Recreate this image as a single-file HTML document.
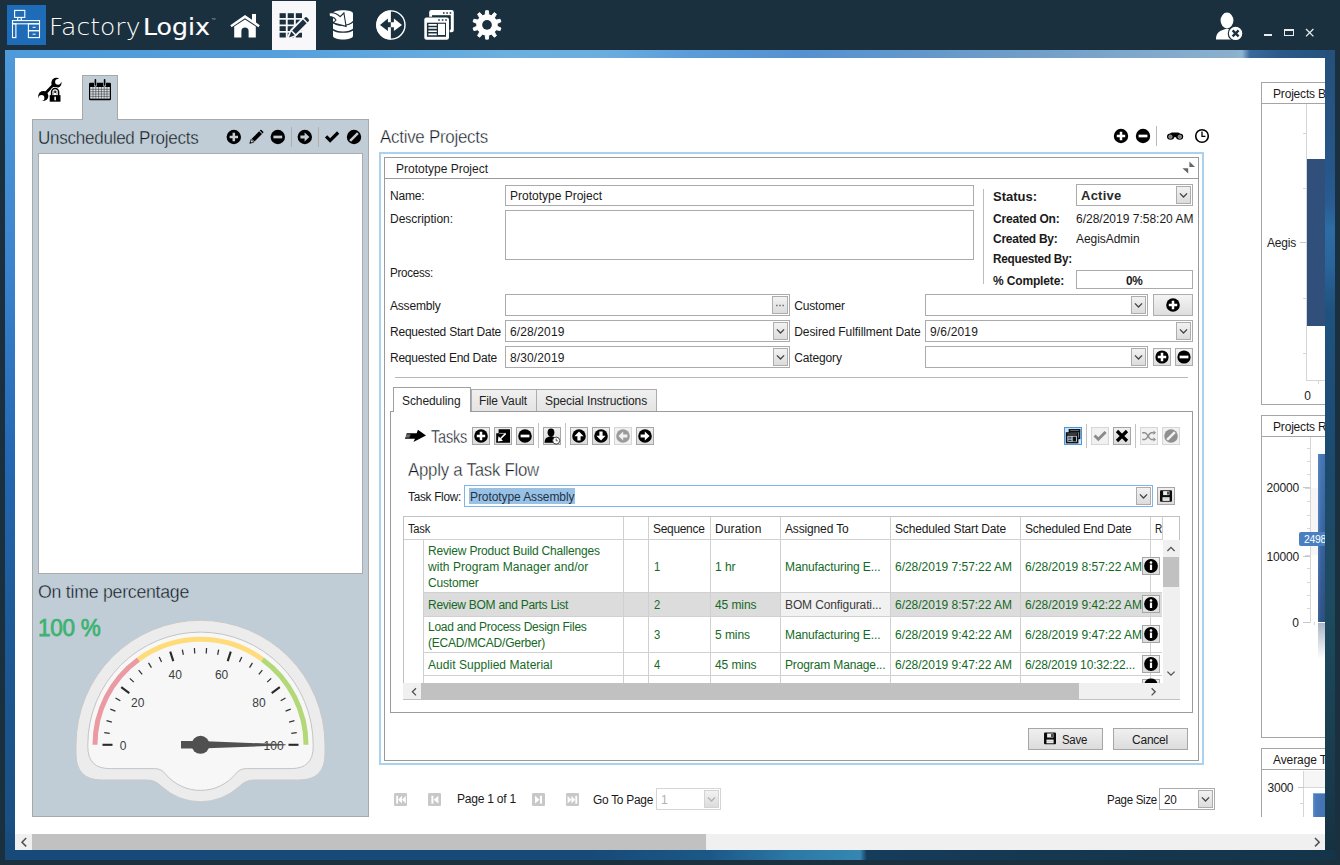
<!DOCTYPE html>
<html lang="en"><head><meta charset="utf-8"><title>FactoryLogix - Project Scheduling</title>
<style>
html,body{margin:0;padding:0}
body{width:1340px;height:865px;overflow:hidden;background:#1a303e;position:relative;
 font-family:"Liberation Sans",sans-serif;font-size:12px;color:#1e1e1e}
.a{position:absolute;box-sizing:border-box}
.t{position:absolute;white-space:nowrap;letter-spacing:-0.15px}
svg{position:absolute;overflow:visible}
.cb{position:absolute;box-sizing:border-box;background:#fff;border:1px solid #acacac}
.dd{position:absolute;box-sizing:border-box;border:1px solid #acacac;background:linear-gradient(#f2f2f2,#dcdcdc)}
.btn{position:absolute;box-sizing:border-box;border:1px solid #acacac;background:linear-gradient(#f3f3f3,#dddddd)}

</style></head><body>
<div class="a" style="left:5px;top:50px;width:1330px;height:8px;background:linear-gradient(90deg,#4f9adb 0%,#559fdc 20%,#6cb0df 38%,#6aaee0 45%,#5a9bd8 52%,#5591d0 60%,#6d9cc8 75%,#8bb0cd 92.5%,#8fb4d0 93%,#3a6a9c 93.6%,#2a5a8a 96%,#25507a 100%)"></div>
<div class="a" style="left:5px;top:50px;width:10px;height:810px;background:linear-gradient(180deg,#4f9adb 0%,#3d86cf 25%,#2468b4 50%,#1d5a98 70%,#1a5083 95%,#174878 100%)"></div>
<div class="a" style="left:1325px;top:50px;width:10px;height:810px;background:linear-gradient(180deg,#25507a 0%,#27568a 15%,#295c92 19%,#2d6ca5 22%,#2a669d 26%,#1f527f 32%,#1d4d76 45%,#1c4a6c 52%,#1e4b60 68%,#1b4254 80%,#17384a 92%,#15303f 100%)"></div>
<div class="a" style="left:5px;top:850px;width:1330px;height:10px;background:linear-gradient(90deg,#17497a 0%,#174a78 44%,#1b5888 53%,#2c78a6 59%,#3587b2 64.3%,#163c5c 64.8%,#15374f 80%,#14344a 100%)"></div>
<div class="a" style="left:15px;top:58px;width:1310px;height:792px;background:#fff"></div>
<div class="a" style="left:7px;top:5px;width:39px;height:40px;background:#1e6bb8"></div>
<svg style="left:7px;top:5px" width="39" height="40" viewBox="7 5 39 40" fill="none" stroke="#fff" stroke-width="1.1">
<rect x="14.6" y="10.4" width="10.2" height="7"/>
<path d="M18 17.6 L17.4 20.2 H21.6 L21 17.6"/>
<rect x="12.5" y="20.6" width="27" height="3.2"/>
<rect x="12.5" y="23.8" width="3.4" height="13.8"/>
<rect x="28.4" y="23.8" width="11.1" height="6.9"/>
<rect x="28.4" y="30.7" width="11.1" height="6.9"/>
<path d="M32.6 27.3 H35.6 M32.6 34.2 H35.6" stroke-width="1"/>
</svg>
<span class="t" style="left:48.6px;top:11.9px;font-size:23px;line-height:30px;color:#fff;font-weight:200;font-family:'DejaVu Sans',sans-serif;letter-spacing:0;transform-origin:0 50%;transform:scaleX(1.089);">Factory</span><span class="t" style="left:142.8px;top:11.9px;font-size:23px;line-height:30px;color:#fff;font-family:'DejaVu Sans',sans-serif;-webkit-text-stroke:0.15px #fff;letter-spacing:0;transform-origin:0 50%;transform:scaleX(1.097);">Logix</span>
<span class="t" style="left:211.2px;top:17.0px;font-size:4.6px;line-height:6px;color:#9fb0bd;letter-spacing:0px;">™</span>
<svg style="left:228px;top:12px" width="34" height="28" viewBox="228 12 34 28">
<path d="M230.3 25.2 L245 15 L252 19.8 V14 H256 V22.6 L259.8 25.2 L258.4 27.2 L245 18.2 L231.6 27.2 Z" fill="#fff"/>
<path d="M234.2 26.6 L245 19.6 L255.8 26.6 V37.6 H248.6 V31 a3.6 3.6 0 0 0 -7.2 0 V37.6 H234.2 Z" fill="#fff"/>
</svg>
<div class="a" style="left:272px;top:1px;width:44px;height:49px;background:#f8f8fb"></div>
<svg style="left:272px;top:1px" width="44" height="49" viewBox="272 1 44 49">
<g fill="#1a303e"><rect x="279.6" y="13.2" width="6.2" height="4.8"/><rect x="287.7" y="13.2" width="6.2" height="4.8"/><rect x="295.8" y="13.2" width="6.2" height="4.8"/><rect x="279.6" y="19.7" width="6.2" height="4.8"/><rect x="287.7" y="19.7" width="6.2" height="4.8"/><rect x="295.8" y="19.7" width="6.2" height="4.8"/><rect x="279.6" y="26.2" width="6.2" height="4.8"/><rect x="287.7" y="26.2" width="6.2" height="4.8"/><rect x="295.8" y="26.2" width="6.2" height="4.8"/><rect x="279.6" y="32.7" width="6.2" height="4.8"/><rect x="287.7" y="32.7" width="6.2" height="4.8"/><rect x="295.8" y="32.7" width="6.2" height="4.8"/></g>
<path d="M288 38.2 L291.4 30.4 L304.4 17.4 L308.8 21.8 L295.8 34.8 Z" fill="#f8f8fb" stroke="#f8f8fb" stroke-width="2.6" stroke-linejoin="round"/>
<path d="M289 37.4 L291.2 31.6 L294.8 35.2 Z M292.2 30.4 L303 19.6 L306.6 23.2 L295.8 34 Z M304 18.6 L305 17.6 a1.4 1.4 0 0 1 2 0 L308.6 19.2 a1.4 1.4 0 0 1 0 2 L307.6 22.2 Z" fill="#1a303e"/>
</svg>
<svg style="left:326px;top:8px" width="32" height="34" viewBox="326 8 32 34">
<path d="M333 13.6 C333 9.2 353 9.2 353 13.6 V36 C353 40.6 333 40.6 333 36 Z" fill="#fff"/>
<path d="M332.6 21.6 C336 26.4 349 26.6 353.4 21.4 M332.6 29.4 C337 33 349 33 353.4 29.4" stroke="#1a303e" stroke-width="1.4" fill="none"/>
<path d="M329 12.9 C333 12.2 337.2 13.6 340.1 16.7 L343.9 13 L346.1 26.4 L333.4 23 L336 20 C334.4 17.8 332 16.7 329.4 16.6 Z" fill="#fff" stroke="#1a303e" stroke-width="1.1" stroke-linejoin="miter"/>
</svg>
<svg style="left:374px;top:9px" width="34" height="34" viewBox="374 9 34 34">
<circle cx="390.9" cy="25" r="14.1" fill="#1a303e" stroke="#fff" stroke-width="1.4"/>
<path d="M390.9 10.4 A14.6 14.6 0 0 0 390.9 39.6 Z" fill="#fff"/>
<path d="M380 25 L387.9 18.5 V22.3 H391 V27.2 H387.9 V31 Z" fill="#1a303e"/>
<path d="M402 25 L393.9 18.5 V22.3 H390.8 V27.2 H393.9 V31 Z" fill="#fff"/>
</svg>
<svg style="left:422px;top:8px" width="34" height="34" viewBox="422 8 34 34">
<rect x="429.2" y="10.1" width="24.6" height="22.1" rx="2.2" fill="#fff"/>
<rect x="432" y="15.2" width="18.8" height="14.5" fill="#1a303e"/>
<path d="M443 13 h1.6 M446.3 13 h1.6 M449.6 13 h1.6" stroke="#1a303e" stroke-width="1.5"/>
<rect x="423.6" y="16.7" width="26.1" height="23.7" rx="2.8" fill="#1a303e"/>
<rect x="424.3" y="17.4" width="24.7" height="22.3" rx="2.2" fill="#fff"/>
<rect x="426.9" y="22.7" width="19.1" height="14.1" fill="#1a303e"/>
<path d="M438.2 20 h1.6 M441.8 20 h1.6 M445.2 20 h1.6" stroke="#1a303e" stroke-width="1.5"/>
<rect x="438" y="23.8" width="7" height="11.2" fill="#fff"/>
<path d="M428.4 24.9 h8.4 M428.4 28 h8.4 M428.4 31.2 h8.4 M428.4 34.4 h8.4" stroke="#fff" stroke-width="1.6"/>
</svg>
<svg style="left:470px;top:8px" width="34" height="34" viewBox="470 8 34 34">
<polygon points="485.15,14.87 485.65,10.66 488.35,10.66 488.85,14.87 491.40,15.70 494.28,12.59 496.46,14.17 494.39,17.87 495.97,20.04 500.12,19.22 500.96,21.78 497.11,23.56 497.11,26.24 500.96,28.02 500.12,30.58 495.97,29.76 494.39,31.93 496.46,35.63 494.28,37.21 491.40,34.10 488.85,34.93 488.35,39.14 485.65,39.14 485.15,34.93 482.60,34.10 479.72,37.21 477.54,35.63 479.61,31.93 478.03,29.76 473.88,30.58 473.04,28.02 476.89,26.24 476.89,23.56 473.04,21.78 473.88,19.22 478.03,20.04 479.61,17.87 477.54,14.17 479.72,12.59 482.60,15.70" fill="#fff" stroke="#fff" stroke-width="0.9" stroke-linejoin="round"/>
<circle cx="487" cy="24.9" r="10.4" fill="#fff"/>
<circle cx="487" cy="24.9" r="4.85" fill="#1a303e"/>
</svg>
<svg style="left:1212px;top:9px" width="36" height="34" viewBox="1212 9 36 34">
<ellipse cx="1227" cy="20.4" rx="6.4" ry="7.8" fill="#fff"/>
<path d="M1216 39.4 C1216 33 1219 31 1224 29.4 L1227 28.4 L1230 29.4 C1235 31 1238 33 1238 39.4 Z" fill="#fff"/>
<circle cx="1235.6" cy="33.4" r="7.3" fill="#fff" stroke="#1a303e" stroke-width="1.2"/>
<path d="M1232.6 30.4 L1238.6 36.4 M1238.6 30.4 L1232.6 36.4" stroke="#1a303e" stroke-width="2.3"/>
</svg>
<div class="a" style="left:1264px;top:33.7px;width:7.6px;height:2.3px;background:#e8ecef"></div>
<div class="a" style="left:1284px;top:29px;width:9.5px;height:7.2px;border:1px solid #e8ecef;border-top-width:2.2px"></div>
<svg style="left:1303px;top:26px" width="14" height="14" viewBox="1303 26 14 14"><path d="M1306 29 L1313.4 36.4 M1313.4 29 L1306 36.4" stroke="#e8ecef" stroke-width="1.3"/></svg>
<div class="a" style="left:32px;top:119px;width:337px;height:698px;background:#c0cdd6;border:1px solid #a8a8a8"></div>
<div class="a" style="left:82px;top:75px;width:36px;height:45px;background:#c0cdd6;border:1px solid #a8a8a8;border-bottom:none"></div>
<svg style="left:34px;top:74px" width="32" height="32" viewBox="34 74 32 32">
<path d="M53.4 85 L45.4 93.2" stroke="#000" stroke-width="2.7"/>
<circle cx="56.4" cy="82.9" r="5.1" fill="#000"/>
<circle cx="58" cy="81.8" r="2.9" fill="#fff"/>
<path d="M58 81.8 L64.4 76.8" stroke="#fff" stroke-width="4.3"/>
<circle cx="43.3" cy="96" r="5.1" fill="#000"/>
<circle cx="41.5" cy="97.9" r="2.9" fill="#fff"/>
<path d="M41.5 97.9 L36 103.8" stroke="#fff" stroke-width="4.1"/>
<path d="M51.6 95.4 V92 a3.5 3.5 0 0 1 7 0 V95.4" fill="#fff" stroke="#fff" stroke-width="3.2"/>
<rect x="48.9" y="94.3" width="12.4" height="8.2" fill="#fff"/>
<path d="M51.6 95.4 V92 a3.5 3.5 0 0 1 7 0 V95.4" fill="none" stroke="#000" stroke-width="1.5"/>
<path d="M53.4 94.6 V92.2 a1.7 1.7 0 0 1 3.4 0 V94.6" fill="none" stroke="#9a9a9a" stroke-width="0.9"/>
<circle cx="55.1" cy="92" r="1" fill="#000"/>
<rect x="49.7" y="95.1" width="10.8" height="6.6" fill="#000"/>
<rect x="54.3" y="96.6" width="1.7" height="3.9" rx="0.8" fill="#e8e8e8"/>
</svg>
<svg style="left:88px;top:78px" width="24" height="24" viewBox="88 78 24 24">
<rect x="89" y="82.8" width="22" height="17.4" rx="1.2" fill="#000"/>
<rect x="90.2" y="87" width="19.6" height="11.6" fill="#d9e1e7"/>
<path d="M93.0 87 V98.6" stroke="#222" stroke-width="0.5"/><path d="M95.8 87 V98.6" stroke="#222" stroke-width="0.5"/><path d="M98.6 87 V98.6" stroke="#222" stroke-width="0.5"/><path d="M101.4 87 V98.6" stroke="#222" stroke-width="0.5"/><path d="M104.2 87 V98.6" stroke="#222" stroke-width="0.5"/><path d="M107.0 87 V98.6" stroke="#222" stroke-width="0.5"/><path d="M90.2 89.35 H109.8" stroke="#222" stroke-width="0.5"/><path d="M90.2 91.70 H109.8" stroke="#222" stroke-width="0.5"/><path d="M90.2 94.05 H109.8" stroke="#222" stroke-width="0.5"/><path d="M90.2 96.40 H109.8" stroke="#222" stroke-width="0.5"/>
<path d="M95.4 79.6 V85.4 M104.6 79.6 V85.4" stroke="#c0cdd6" stroke-width="2.8" stroke-linecap="round"/>
<path d="M95.4 79.8 V85 M104.6 79.8 V85" stroke="#000" stroke-width="1.6" stroke-linecap="round"/>
</svg>
<span class="t" style="left:38px;top:126.1px;font-size:18px;line-height:24px;color:#0d151d;-webkit-text-stroke:0.4px #c0cdd6;letter-spacing:-0.28px;transform-origin:0 50%;transform:scaleX(0.947);">Unscheduled Projects</span>
<div class="a" style="left:38px;top:153px;width:325px;height:421px;background:#fff;border:1px solid #ababab"></div>
<svg style="left:0;top:0" width="1340" height="865" viewBox="0 0 1340 865">
<circle cx="233.8" cy="137" r="7.2" fill="#000"/><path d="M229.60000000000002 137 H238.0 M233.8 132.8 V141.2" stroke="#c0cdd6" stroke-width="2.5"/>
<g transform="translate(256 137.2) scale(0.88)"><path d="M-7 7 L-5.6 2.4 L-2.4 5.6 Z" fill="none" stroke="#000" stroke-width="0.8"/><path d="M-7 7 L-6.3 4.8 L-4.8 6.3 Z" fill="#000"/><path d="M-4.9 1.7 L3.6 -6.8 L6.8 -3.6 L-1.7 4.9 Z" fill="#000"/><path d="M4.3 -7.5 L5 -8.2 a0.9 0.9 0 0 1 1.3 0 L8.2 -6.3 a0.9 0.9 0 0 1 0 1.3 L7.5 -4.3 Z" fill="#000"/></g>
<circle cx="277.8" cy="137" r="7.2" fill="#000"/><path d="M273.40000000000003 137 H282.2" stroke="#c0cdd6" stroke-width="2.7"/>
<path d="M291.5 127 V147 M318.5 127 V147" stroke="#b3aea8" stroke-width="1"/>
<circle cx="304.8" cy="137" r="7.2" fill="#000"/><path transform="rotate(0 304.8 137)" d="M300.40000000000003 135.4 H304.6 V132.4 L309.40000000000003 137 L304.6 141.6 V138.6 H300.40000000000003 Z" fill="#c0cdd6"/>
<path transform="translate(332 137.4) scale(1.04)" d="M-6.8 0.2 L-4.6 -2 L-1.8 0.8 L4.8 -5.8 L7 -3.6 L-1.8 5.2 Z" fill="#000"/>
<circle cx="354" cy="137" r="7.2" fill="#000"/><path d="M350.1 140.9 L357.9 133.1" stroke="#c0cdd6" stroke-width="2.5" stroke-linecap="butt"/>
</svg>
<span class="t" style="left:38px;top:579.7px;font-size:18px;line-height:24px;color:#0d151d;-webkit-text-stroke:0.4px #c0cdd6;letter-spacing:-0.28px;transform-origin:0 50%;transform:scaleX(0.987);">On time percentage</span>
<span class="t" style="left:38px;top:614.4px;font-size:23.5px;line-height:28px;color:#3cb371;-webkit-text-stroke:0.75px #3cb371;letter-spacing:-0.28px;transform-origin:0 50%;transform:scaleX(0.958);">100 %</span>
<svg style="left:0;top:0" width="1340" height="865" viewBox="0 0 1340 865">
<path d="M76.0 744.8 A124.5 124.5 0 0 1 325.0 744.8 V754.0 Q325.0 780.0 299.0 780.0 H254.3 Q245.3 780.0 239.2 786.6 A57 57 0 0 1 161.8 786.6 Q155.7 780.0 146.7 780.0 H102.0 Q76.0 780.0 76.0 754.0 Z" fill="#ececec" stroke="#c9c9c9" stroke-width="1"/>
<path d="M87.8 744.8 A112.7 112.7 0 0 1 313.2 744.8 V746.6 Q313.2 768.6 291.2 768.6 H246.4 Q239.4 768.6 235.3 774.3 A45.6 45.6 0 0 1 165.7 774.3 Q161.6 768.6 154.6 768.6 H109.8 Q87.8 768.6 87.8 746.6 Z" fill="#f7f7f7" stroke="#c4c4c4" stroke-width="1"/>
<path d="M95.00 744.80 A105.5 105.5 0 0 1 138.49 659.45" stroke="#ea9aa2" stroke-width="5" fill="none"/>
<path d="M138.49 659.45 A105.5 105.5 0 0 1 262.51 659.45" stroke="#ffdc7a" stroke-width="5" fill="none"/>
<path d="M262.51 659.45 A105.5 105.5 0 0 1 306.00 744.80" stroke="#b2d878" stroke-width="5" fill="none"/>
<path d="M112.50 744.80 L102.50 744.80" stroke="#2a2a2a" stroke-width="2.1"/><path d="M109.72 733.33 L104.26 732.64" stroke="#333" stroke-width="1.25"/><path d="M111.87 722.04 L106.55 720.68" stroke="#333" stroke-width="1.25"/><path d="M115.43 711.12 L110.31 709.09" stroke="#333" stroke-width="1.25"/><path d="M120.32 700.72 L115.50 698.07" stroke="#333" stroke-width="1.25"/><path d="M129.31 693.07 L121.22 687.20" stroke="#2a2a2a" stroke-width="2.1"/><path d="M133.80 682.16 L129.79 678.40" stroke="#333" stroke-width="1.25"/><path d="M142.18 674.30 L138.67 670.06" stroke="#333" stroke-width="1.25"/><path d="M151.47 667.54 L148.52 662.90" stroke="#333" stroke-width="1.25"/><path d="M161.54 662.01 L159.20 657.03" stroke="#333" stroke-width="1.25"/><path d="M173.31 661.11 L170.22 651.60" stroke="#2a2a2a" stroke-width="2.1"/><path d="M183.35 654.92 L182.32 649.52" stroke="#333" stroke-width="1.25"/><path d="M194.75 653.48 L194.41 647.99" stroke="#333" stroke-width="1.25"/><path d="M206.25 653.48 L206.59 647.99" stroke="#333" stroke-width="1.25"/><path d="M217.65 654.92 L218.68 649.52" stroke="#333" stroke-width="1.25"/><path d="M227.69 661.11 L230.78 651.60" stroke="#2a2a2a" stroke-width="2.1"/><path d="M239.46 662.01 L241.80 657.03" stroke="#333" stroke-width="1.25"/><path d="M249.53 667.54 L252.48 662.90" stroke="#333" stroke-width="1.25"/><path d="M258.82 674.30 L262.33 670.06" stroke="#333" stroke-width="1.25"/><path d="M267.20 682.16 L271.21 678.40" stroke="#333" stroke-width="1.25"/><path d="M271.69 693.07 L279.78 687.20" stroke="#2a2a2a" stroke-width="2.1"/><path d="M280.68 700.72 L285.50 698.07" stroke="#333" stroke-width="1.25"/><path d="M285.57 711.12 L290.69 709.09" stroke="#333" stroke-width="1.25"/><path d="M289.13 722.04 L294.45 720.68" stroke="#333" stroke-width="1.25"/><path d="M291.28 733.33 L296.74 732.64" stroke="#333" stroke-width="1.25"/><path d="M288.50 744.80 L298.50 744.80" stroke="#2a2a2a" stroke-width="2.1"/>
<text x="123.0" y="749.8" text-anchor="middle" font-size="12" fill="#3c3c3c" font-family="Liberation Sans, sans-serif">0</text><text x="137.8" y="706.6" text-anchor="middle" font-size="12" fill="#3c3c3c" font-family="Liberation Sans, sans-serif">20</text><text x="175.3" y="679.4" text-anchor="middle" font-size="12" fill="#3c3c3c" font-family="Liberation Sans, sans-serif">40</text><text x="221.6" y="679.4" text-anchor="middle" font-size="12" fill="#3c3c3c" font-family="Liberation Sans, sans-serif">60</text><text x="259.0" y="706.6" text-anchor="middle" font-size="12" fill="#3c3c3c" font-family="Liberation Sans, sans-serif">80</text><text x="273.6" y="749.8" text-anchor="middle" font-size="12" fill="#3c3c3c" font-family="Liberation Sans, sans-serif">100</text>
<path d="M181 741 H200 L285.6 744.3 V745.3 L200 748.6 H181 Z" fill="#505050"/>
<circle cx="200.5" cy="744.8" r="9" fill="#505050"/>
</svg>
<span class="t" style="left:380px;top:124.8px;font-size:18px;line-height:24px;color:#0d151d;-webkit-text-stroke:0.4px #fff;letter-spacing:-0.28px;transform-origin:0 50%;transform:scaleX(0.940);">Active Projects</span>
<svg style="left:0;top:0" width="1340" height="865" viewBox="0 0 1340 865">
<circle cx="1121" cy="136" r="7.2" fill="#000"/><path d="M1116.8 136 H1125.2 M1121 131.8 V140.2" stroke="#fff" stroke-width="2.5"/>
<circle cx="1143" cy="136" r="7.2" fill="#000"/><path d="M1138.6 136 H1147.4" stroke="#fff" stroke-width="2.7"/>
<path d="M1156.5 126 V146" stroke="#b9b9b9" stroke-width="1"/>
<g fill="#000"><ellipse cx="1170.6" cy="136.6" rx="3.6" ry="3.2"/><ellipse cx="1179.6" cy="136.6" rx="3.6" ry="3.2"/><rect x="1170" y="132.6" width="10" height="4.6" rx="2"/></g>
<circle cx="1170.4" cy="136.8" r="1.8" fill="#777" stroke="#ddd" stroke-width="0.5"/><circle cx="1179.8" cy="136.8" r="1.8" fill="#777" stroke="#ddd" stroke-width="0.5"/>
<circle cx="1202" cy="136" r="6.3" fill="#fff" stroke="#000" stroke-width="1.6"/>
<path d="M1202 131.6 V136.4 H1205.4" stroke="#000" stroke-width="1.3" fill="none"/>
</svg>
<div class="a" style="left:379px;top:152px;width:825px;height:613px;border:2px solid #a9d1f0;background:#fff"></div>
<div class="a" style="left:384px;top:157px;width:815px;height:604px;border:1px solid #9b9b9b"></div>
<div class="a" style="left:384px;top:178px;width:815px;height:1px;background:#9b9b9b"></div>
<span class="t" style="left:396px;top:161.0px;font-size:12px;line-height:17px;color:#1e1e1e;letter-spacing:-0.00px;">Prototype Project</span>
<svg style="left:1180px;top:160px" width="18" height="16" viewBox="1180 160 18 16"><path d="M1189.4 161.6 L1195 167 H1189.4 Z M1188.2 173.6 L1182.4 168.2 H1188.2 Z" fill="#666"/></svg>
<span class="t" style="left:390px;top:188.0px;font-size:12px;line-height:17px;color:#1a1a1a;letter-spacing:-0.17px;">Name:</span>
<div class="a" style="left:505px;top:185px;width:469px;height:21px;border:1px solid #ababab;background:#fff"></div>
<span class="t" style="left:510px;top:188.0px;font-size:12px;line-height:17px;color:#1a1a1a;letter-spacing:-0.00px;">Prototype Project</span>
<span class="t" style="left:390px;top:210.7px;font-size:12px;line-height:17px;color:#1a1a1a;letter-spacing:-0.03px;">Description:</span>
<div class="a" style="left:505px;top:210px;width:469px;height:50px;border:1px solid #ababab;background:#fff"></div>
<span class="t" style="left:390px;top:265.0px;font-size:12px;line-height:17px;color:#1a1a1a;letter-spacing:-0.28px;transform-origin:0 50%;transform:scaleX(0.967);">Process:</span>
<div class="a" style="left:983px;top:189px;width:1px;height:95px;background:#bdbdbd"></div>
<span class="t" style="left:993px;top:188.1px;font-size:13px;line-height:18px;color:#1a1a1a;font-weight:700;letter-spacing:-0.01px;">Status:</span>
<div class="a" style="left:1076px;top:184px;width:117px;height:22px;border:1px solid #ababab;background:#fff"></div>
<div class="dd" style="left:1176px;top:186px;width:15px;height:18px;border-color:#adadad"></div><svg style="left:1176px;top:186px" width="15" height="18" viewBox="0 0 15 18"><path d="M3.9 7.4 L7.5 11.0 L11.1 7.4" fill="none" stroke="#444" stroke-width="1.3"/></svg>
<span class="t" style="left:1081px;top:186.6px;font-size:13px;line-height:18px;color:#2a2a2a;font-weight:700;letter-spacing:0.24px;">Active</span>
<span class="t" style="left:993px;top:211.0px;font-size:12px;line-height:17px;color:#1a1a1a;font-weight:700;letter-spacing:-0.20px;">Created On:</span>
<span class="t" style="left:1076px;top:211.0px;font-size:12px;line-height:17px;color:#1a1a1a;letter-spacing:0.00px;">6/28/2019 7:58:20 AM</span>
<span class="t" style="left:993px;top:231.3px;font-size:12px;line-height:17px;color:#1a1a1a;font-weight:700;letter-spacing:-0.26px;">Created By:</span>
<span class="t" style="left:1076px;top:231.3px;font-size:12px;line-height:17px;color:#1a1a1a;letter-spacing:-0.05px;">AegisAdmin</span>
<span class="t" style="left:993px;top:250.8px;font-size:12px;line-height:17px;color:#1a1a1a;font-weight:700;letter-spacing:-0.28px;transform-origin:0 50%;transform:scaleX(0.983);">Requested By:</span>
<span class="t" style="left:993px;top:273.0px;font-size:12px;line-height:17px;color:#1a1a1a;font-weight:700;letter-spacing:-0.15px;">% Complete:</span>
<div class="a" style="left:1076px;top:270px;width:117px;height:19px;border:1px solid #ababab;background:#fff"></div>
<span class="t" style="left:1126px;top:272.8px;font-size:12px;line-height:17px;color:#1a1a1a;font-weight:700;letter-spacing:-0.28px;transform-origin:0 50%;transform:scaleX(0.983);">0%</span>
<span class="t" style="left:390px;top:298.3px;font-size:12px;line-height:17px;color:#1a1a1a;letter-spacing:-0.19px;">Assembly</span>
<div class="a" style="left:505px;top:294px;width:285px;height:22px;border:1px solid #ababab;background:#fff"></div>
<div class="dd" style="left:772px;top:296px;width:16px;height:18px;border-color:#adadad"></div><svg style="left:772px;top:296px" width="16" height="18" viewBox="0 0 16 18"><path d="M4.0 9.5 h1.6 m1.6 0 h1.6 m1.6 0 h1.6" stroke="#777" stroke-width="1.4"/></svg>
<span class="t" style="left:794.2px;top:298.3px;font-size:12px;line-height:17px;color:#1a1a1a;letter-spacing:-0.18px;">Customer</span>
<div class="a" style="left:925px;top:294px;width:223px;height:22px;border:1px solid #ababab;background:#fff"></div>
<div class="dd" style="left:1131px;top:296px;width:15px;height:18px;border-color:#adadad"></div><svg style="left:1131px;top:296px" width="15" height="18" viewBox="0 0 15 18"><path d="M3.9 7.4 L7.5 11.0 L11.1 7.4" fill="none" stroke="#444" stroke-width="1.3"/></svg>
<div class="a" style="left:1153px;top:294px;width:40px;height:22px;border:1px solid #adadad;background:linear-gradient(#f4f4f4,#dedede)"></div>
<svg style="left:0;top:0" width="1340" height="865" viewBox="0 0 1340 865"><circle cx="1173" cy="305" r="6.8" fill="#000"/><path d="M1168.8 305 H1177.2 M1173 300.8 V309.2" stroke="#fff" stroke-width="2.5"/></svg>
<span class="t" style="left:390px;top:324.1px;font-size:12px;line-height:17px;color:#1a1a1a;letter-spacing:-0.22px;">Requested Start Date</span>
<div class="a" style="left:505px;top:320px;width:285px;height:22px;border:1px solid #ababab;background:#fff"></div>
<div class="dd" style="left:773px;top:322px;width:15px;height:18px;border-color:#adadad"></div><svg style="left:773px;top:322px" width="15" height="18" viewBox="0 0 15 18"><path d="M3.9 7.4 L7.5 11.0 L11.1 7.4" fill="none" stroke="#444" stroke-width="1.3"/></svg>
<span class="t" style="left:510px;top:324.1px;font-size:12px;line-height:17px;color:#1a1a1a;letter-spacing:0.12px;">6/28/2019</span>
<span class="t" style="left:794.2px;top:324.1px;font-size:12px;line-height:17px;color:#1a1a1a;letter-spacing:-0.07px;">Desired Fulfillment Date</span>
<div class="a" style="left:925px;top:320px;width:268px;height:22px;border:1px solid #ababab;background:#fff"></div>
<div class="dd" style="left:1176px;top:322px;width:15px;height:18px;border-color:#adadad"></div><svg style="left:1176px;top:322px" width="15" height="18" viewBox="0 0 15 18"><path d="M3.9 7.4 L7.5 11.0 L11.1 7.4" fill="none" stroke="#444" stroke-width="1.3"/></svg>
<span class="t" style="left:930px;top:324.1px;font-size:12px;line-height:17px;color:#1a1a1a;letter-spacing:0.16px;">9/6/2019</span>
<span class="t" style="left:390px;top:350.1px;font-size:12px;line-height:17px;color:#1a1a1a;letter-spacing:-0.25px;">Requested End Date</span>
<div class="a" style="left:505px;top:346px;width:285px;height:22px;border:1px solid #ababab;background:#fff"></div>
<div class="dd" style="left:773px;top:348px;width:15px;height:18px;border-color:#adadad"></div><svg style="left:773px;top:348px" width="15" height="18" viewBox="0 0 15 18"><path d="M3.9 7.4 L7.5 11.0 L11.1 7.4" fill="none" stroke="#444" stroke-width="1.3"/></svg>
<span class="t" style="left:510px;top:350.1px;font-size:12px;line-height:17px;color:#1a1a1a;letter-spacing:0.12px;">8/30/2019</span>
<span class="t" style="left:794.2px;top:350.1px;font-size:12px;line-height:17px;color:#1a1a1a;letter-spacing:-0.14px;">Category</span>
<div class="a" style="left:925px;top:346px;width:223px;height:22px;border:1px solid #ababab;background:#fff"></div>
<div class="dd" style="left:1131px;top:348px;width:15px;height:18px;border-color:#adadad"></div><svg style="left:1131px;top:348px" width="15" height="18" viewBox="0 0 15 18"><path d="M3.9 7.4 L7.5 11.0 L11.1 7.4" fill="none" stroke="#444" stroke-width="1.3"/></svg>
<div class="a" style="left:1153px;top:348px;width:18px;height:18px;border:1px solid #adadad;background:linear-gradient(#f4f4f4,#dedede)"></div>
<svg style="left:0;top:0" width="1340" height="865" viewBox="0 0 1340 865"><circle cx="1162" cy="357" r="6.6" fill="#000"/><path d="M1157.8 357 H1166.2 M1162 352.8 V361.2" stroke="#fff" stroke-width="2.5"/></svg>
<div class="a" style="left:1175px;top:348px;width:18px;height:18px;border:1px solid #adadad;background:linear-gradient(#f4f4f4,#dedede)"></div>
<svg style="left:0;top:0" width="1340" height="865" viewBox="0 0 1340 865"><circle cx="1184" cy="357" r="6.6" fill="#000"/><path d="M1179.6 357 H1188.4" stroke="#fff" stroke-width="2.7"/></svg>
<div class="a" style="left:395px;top:377px;width:793px;height:1px;background:#b8b8b8"></div>
<div class="a" style="left:471px;top:389px;width:66px;height:23px;border:1px solid #acacac;background:linear-gradient(#f0f0f0,#e4e4e4)"></div>
<div class="a" style="left:536px;top:389px;width:121px;height:23px;border:1px solid #acacac;background:linear-gradient(#f0f0f0,#e4e4e4)"></div>
<div class="a" style="left:390px;top:411px;width:803px;height:302px;border:1px solid #9b9b9b;background:#fff"></div>
<div class="a" style="left:393px;top:387px;width:78px;height:25px;border:1px solid #a0a0a0;border-bottom:none;background:#fff"></div>
<span class="t" style="left:402px;top:393.0px;font-size:12px;line-height:17px;color:#222;letter-spacing:-0.09px;">Scheduling</span>
<span class="t" style="left:479px;top:393.0px;font-size:12px;line-height:17px;color:#222;letter-spacing:-0.11px;">File Vault</span>
<span class="t" style="left:545px;top:393.0px;font-size:12px;line-height:17px;color:#222;letter-spacing:-0.10px;">Special Instructions</span>
<svg style="left:0;top:0" width="1340" height="865" viewBox="0 0 1340 865"><path d="M417.9 429.8 L426 435.5 L413.4 442 L415 438.7 H404.9 L406.7 433.2 H416.7 Z" fill="#000"/>
<path d="M405.6 435.1 H410.4 M405 436.9 H409.6" stroke="#fff" stroke-width="0.7"/></svg>
<span class="t" style="left:431.4px;top:424.7px;font-size:18px;line-height:24px;color:#0d151d;-webkit-text-stroke:0.4px #fff;letter-spacing:-0.28px;transform-origin:0 50%;transform:scaleX(0.807);">Tasks</span>
<div class="a" style="left:472px;top:427px;width:18px;height:18px;border:1px solid #a6a6a6;background:linear-gradient(#f0f0f0,#dcdcdc)"></div>
<svg style="left:0;top:0" width="1340" height="865" viewBox="0 0 1340 865"><circle cx="481" cy="436" r="6.8" fill="#000"/><path d="M476.8 436 H485.2 M481 431.8 V440.2" stroke="#fff" stroke-width="2.5"/></svg>
<div class="a" style="left:494px;top:427px;width:18px;height:18px;border:1px solid #a6a6a6;background:linear-gradient(#f0f0f0,#dcdcdc)"></div>
<svg style="left:0;top:0" width="1340" height="865" viewBox="0 0 1340 865"><path d="M498.6 429.2 H510 V442.8 H496.2 V433.2 H498.6 Z" fill="#000"/>
<path d="M499.2 433.4 H506" stroke="#ddd" stroke-width="0.7"/>
<path d="M505.6 433.6 L500.4 438.8" stroke="#fff" stroke-width="1.5"/><path d="M497.8 441.4 L498.5 436.2 L503 440.7 Z" fill="#fff"/></svg>
<div class="a" style="left:516px;top:427px;width:18px;height:18px;border:1px solid #a6a6a6;background:linear-gradient(#f0f0f0,#dcdcdc)"></div>
<svg style="left:0;top:0" width="1340" height="865" viewBox="0 0 1340 865"><circle cx="525" cy="436" r="6.8" fill="#000"/><path d="M520.6 436 H529.4" stroke="#fff" stroke-width="2.7"/></svg>
<div class="a" style="left:538px;top:423px;width:1px;height:25px;background:#c4c4c4"></div>
<div class="a" style="left:543px;top:427px;width:18px;height:18px;border:1px solid #a6a6a6;background:linear-gradient(#f0f0f0,#dcdcdc)"></div>
<svg style="left:0;top:0" width="1340" height="865" viewBox="0 0 1340 865"><ellipse cx="551" cy="432.5" rx="3.4" ry="3.9" fill="#000"/><path d="M544.6 442.8 C544.6 438.2 546.6 437.2 551 436 C555.4 437.2 557.4 438.2 557.4 442.8 Z" fill="#000"/>
<circle cx="556.2" cy="440.6" r="3.5" fill="#fff" stroke="#333" stroke-width="0.9"/><path d="M556.2 438.6 V440.8 H557.8" stroke="#333" stroke-width="0.8" fill="none"/></svg>
<div class="a" style="left:565px;top:423px;width:1px;height:25px;background:#c4c4c4"></div>
<div class="a" style="left:570px;top:427px;width:18px;height:18px;border:1px solid #a6a6a6;background:linear-gradient(#f0f0f0,#dcdcdc)"></div>
<svg style="left:0;top:0" width="1340" height="865" viewBox="0 0 1340 865"><circle cx="579" cy="436" r="6.8" fill="#000"/><path transform="rotate(270 579 436)" d="M574.6 434.4 H578.8 V431.4 L583.6 436 L578.8 440.6 V437.6 H574.6 Z" fill="#fff"/></svg>
<div class="a" style="left:592px;top:427px;width:18px;height:18px;border:1px solid #a6a6a6;background:linear-gradient(#f0f0f0,#dcdcdc)"></div>
<svg style="left:0;top:0" width="1340" height="865" viewBox="0 0 1340 865"><circle cx="601" cy="436" r="6.8" fill="#000"/><path transform="rotate(90 601 436)" d="M596.6 434.4 H600.8 V431.4 L605.6 436 L600.8 440.6 V437.6 H596.6 Z" fill="#fff"/></svg>
<div class="a" style="left:614px;top:427px;width:18px;height:18px;border:1px solid #d6d6d6;background:#f1f1f1"></div>
<svg style="left:0;top:0" width="1340" height="865" viewBox="0 0 1340 865"><circle cx="623" cy="436" r="6.8" fill="#9a9a9a"/><path transform="rotate(180 623 436)" d="M618.6 434.4 H622.8 V431.4 L627.6 436 L622.8 440.6 V437.6 H618.6 Z" fill="#f1f1f1"/></svg>
<div class="a" style="left:636px;top:427px;width:18px;height:18px;border:1px solid #a6a6a6;background:linear-gradient(#f0f0f0,#dcdcdc)"></div>
<svg style="left:0;top:0" width="1340" height="865" viewBox="0 0 1340 865"><circle cx="645" cy="436" r="6.8" fill="#000"/><path transform="rotate(0 645 436)" d="M640.6 434.4 H644.8 V431.4 L649.6 436 L644.8 440.6 V437.6 H640.6 Z" fill="#fff"/></svg>
<div class="a" style="left:1064px;top:427px;width:18px;height:18px;border:1px solid #4a97e0;background:#cfe3f8"></div>
<svg style="left:0;top:0" width="1340" height="865" viewBox="0 0 1340 865"><rect x="1069.4" y="429.8" width="10.2" height="8.6" fill="#cfe3f8" stroke="#111" stroke-width="1.5"/>
<path d="M1069.4 431.6 H1079.6" stroke="#111" stroke-width="1.4"/>
<rect x="1066.6" y="433" width="11" height="9.6" fill="#cfe3f8" stroke="#111" stroke-width="1.6"/>
<path d="M1066.6 435 H1077.6" stroke="#111" stroke-width="1.6"/>
<rect x="1072.6" y="436.6" width="3.4" height="4.8" fill="#111"/>
<path d="M1068.2 437.2 h3.4 M1068.2 438.9 h3.4 M1068.2 440.6 h3.4" stroke="#111" stroke-width="0.9"/></svg>
<div class="a" style="left:1086px;top:424px;width:1px;height:24px;background:#c4c4c4"></div>
<div class="a" style="left:1091px;top:427px;width:18px;height:18px;border:1px solid #d6d6d6;background:#f1f1f1"></div>
<svg style="left:0;top:0" width="1340" height="865" viewBox="0 0 1340 865"><path transform="translate(1100 436.4) scale(0.95)" d="M-6.8 0.2 L-4.6 -2 L-1.8 0.8 L4.8 -5.8 L7 -3.6 L-1.8 5.2 Z" fill="#8a8a8a"/></svg>
<div class="a" style="left:1113px;top:427px;width:18px;height:18px;border:1px solid #a6a6a6;background:linear-gradient(#f0f0f0,#dcdcdc)"></div>
<svg style="left:0;top:0" width="1340" height="865" viewBox="0 0 1340 865"><path d="M1117 431 L1127 441 M1127 431 L1117 441" stroke="#000" stroke-width="3.2"/></svg>
<div class="a" style="left:1135px;top:424px;width:1px;height:24px;background:#c4c4c4"></div>
<div class="a" style="left:1140px;top:427px;width:18px;height:18px;border:1px solid #d6d6d6;background:#f1f1f1"></div>
<svg style="left:0;top:0" width="1340" height="865" viewBox="0 0 1340 865"><g fill="none" stroke="#8f8f8f" stroke-width="1.5"><path d="M1142.2 432.8 H1145 C1147.6 432.8 1148.6 439.4 1151.4 439.4 H1153.6"/><path d="M1142.2 439.4 H1145 C1147.6 439.4 1148.6 432.8 1151.4 432.8 H1153.6"/></g>
<path d="M1153.4 430.6 L1156 432.8 L1153.4 435 Z M1153.4 437.2 L1156 439.4 L1153.4 441.6 Z" fill="#8f8f8f"/></svg>
<div class="a" style="left:1162px;top:427px;width:18px;height:18px;border:1px solid #d6d6d6;background:#f1f1f1"></div>
<svg style="left:0;top:0" width="1340" height="865" viewBox="0 0 1340 865"><circle cx="1171" cy="436" r="6.8" fill="#8f8f8f"/><path d="M1167.1 439.9 L1174.9 432.1" stroke="#f1f1f1" stroke-width="2.5" stroke-linecap="butt"/></svg>
<span class="t" style="left:408px;top:458.1px;font-size:18px;line-height:24px;color:#0d151d;-webkit-text-stroke:0.4px #fff;letter-spacing:-0.28px;transform-origin:0 50%;transform:scaleX(0.936);">Apply a Task Flow</span>
<span class="t" style="left:408px;top:488.7px;font-size:12px;line-height:17px;color:#1a1a1a;letter-spacing:-0.28px;transform-origin:0 50%;transform:scaleX(0.984);">Task Flow:</span>
<div class="a" style="left:464px;top:485px;width:689px;height:22px;border:1px solid #7eb4ea;background:#fff"></div>
<div class="dd" style="left:1136px;top:487px;width:15px;height:18px;border-color:#adadad"></div><svg style="left:1136px;top:487px" width="15" height="18" viewBox="0 0 15 18"><path d="M3.9 7.4 L7.5 11.0 L11.1 7.4" fill="none" stroke="#444" stroke-width="1.3"/></svg>
<div class="a" style="left:468.5px;top:488px;width:106.5px;height:15.6px;background:#99c1e6"></div>
<span class="t" style="left:470px;top:488.7px;font-size:12px;line-height:17px;color:#1f3347;letter-spacing:-0.09px;">Prototype Assembly</span>
<div class="a" style="left:1157px;top:487px;width:18px;height:18px;border:1px solid #a6a6a6;background:linear-gradient(#f0f0f0,#dcdcdc)"></div>
<svg style="left:0;top:0" width="1340" height="865" viewBox="0 0 1340 865"><rect x="1160" y="490.2" width="12" height="11.6" rx="1" fill="#0c0c0c"/><rect x="1163.1" y="491.09999999999997" width="6.3" height="4" fill="#ececec"/><rect x="1167.3" y="491.59999999999997" width="1.4" height="3" fill="#0c0c0c"/><rect x="1162.5" y="497.2" width="7.1" height="3.7" fill="#ececec"/><rect x="1163.4" y="498.59999999999997" width="5.3" height="0.6" fill="#bbb"/></svg>
<div class="a" style="left:403px;top:516px;width:777px;height:184px;border:1px solid #c2c2c2;background:#fff"></div>
<div class="a" style="left:424px;top:593px;width:356.5px;height:22.5px;background:#dcdcdc"></div>
<div class="a" style="left:781px;top:593px;width:109.5px;height:22.5px;background:#f1f1f1"></div>
<div class="a" style="left:891px;top:593px;width:271px;height:22.5px;background:#dcdcdc"></div>
<div class="a" style="left:404px;top:539px;width:758px;height:1px;background:#d0d0d0"></div>
<div class="a" style="left:623.0px;top:517px;width:1px;height:23px;background:#d0d0d0"></div>
<div class="a" style="left:648.0px;top:517px;width:1px;height:23px;background:#d0d0d0"></div>
<div class="a" style="left:710.0px;top:517px;width:1px;height:23px;background:#d0d0d0"></div>
<div class="a" style="left:780.0px;top:517px;width:1px;height:23px;background:#d0d0d0"></div>
<div class="a" style="left:890.0px;top:517px;width:1px;height:23px;background:#d0d0d0"></div>
<div class="a" style="left:1020.0px;top:517px;width:1px;height:23px;background:#d0d0d0"></div>
<div class="a" style="left:1150.0px;top:517px;width:1px;height:23px;background:#d0d0d0"></div>
<div class="a" style="left:1162.0px;top:517px;width:1px;height:23px;background:#d0d0d0"></div>
<div class="a" style="left:423px;top:540px;width:1px;height:143px;background:#d0d0d0"></div>
<div class="a" style="left:623.0px;top:540px;width:1px;height:143px;background:#d0d0d0"></div>
<div class="a" style="left:648.0px;top:540px;width:1px;height:143px;background:#d0d0d0"></div>
<div class="a" style="left:710.0px;top:540px;width:1px;height:143px;background:#d0d0d0"></div>
<div class="a" style="left:780.0px;top:540px;width:1px;height:143px;background:#d0d0d0"></div>
<div class="a" style="left:890.0px;top:540px;width:1px;height:143px;background:#d0d0d0"></div>
<div class="a" style="left:1020.0px;top:540px;width:1px;height:143px;background:#d0d0d0"></div>
<div class="a" style="left:1150.0px;top:540px;width:1px;height:143px;background:#d0d0d0"></div>
<div class="a" style="left:423px;top:591.5px;width:739px;height:1px;background:#d0d0d0"></div>
<div class="a" style="left:423px;top:615.5px;width:739px;height:1px;background:#d0d0d0"></div>
<div class="a" style="left:423px;top:651.5px;width:739px;height:1px;background:#d0d0d0"></div>
<div class="a" style="left:423px;top:674.5px;width:739px;height:1px;background:#d0d0d0"></div>
<span class="t" style="left:408px;top:521.0px;font-size:12px;line-height:17px;color:#1a1a1a;letter-spacing:-0.28px;transform-origin:0 50%;transform:scaleX(0.933);">Task</span>
<span class="t" style="left:653px;top:521.0px;font-size:12px;line-height:17px;color:#1a1a1a;letter-spacing:-0.28px;transform-origin:0 50%;transform:scaleX(0.994);">Sequence</span>
<span class="t" style="left:715px;top:521.0px;font-size:12px;line-height:17px;color:#1a1a1a;letter-spacing:0.14px;">Duration</span>
<span class="t" style="left:785px;top:521.0px;font-size:12px;line-height:17px;color:#1a1a1a;letter-spacing:-0.15px;">Assigned To</span>
<span class="t" style="left:895px;top:521.0px;font-size:12px;line-height:17px;color:#1a1a1a;letter-spacing:-0.15px;">Scheduled Start Date</span>
<span class="t" style="left:1025px;top:521.0px;font-size:12px;line-height:17px;color:#1a1a1a;letter-spacing:-0.20px;">Scheduled End Date</span>
<span class="t" style="left:1155px;top:521.0px;font-size:12px;line-height:17px;color:#1a1a1a;letter-spacing:-0.28px;transform-origin:0 50%;transform:scaleX(0.834);">R</span>
<span class="t" style="left:428px;top:542.7px;font-size:12px;line-height:17px;color:#14691f;letter-spacing:-0.18px;">Review Product Build Challenges</span>
<span class="t" style="left:428px;top:558.7px;font-size:12px;line-height:17px;color:#14691f;letter-spacing:0.06px;">with Program Manager and/or</span>
<span class="t" style="left:428px;top:574.7px;font-size:12px;line-height:17px;color:#14691f;letter-spacing:-0.19px;">Customer</span>
<span class="t" style="left:654px;top:558.7px;font-size:12px;line-height:17px;color:#14691f;letter-spacing:-0.28px;transform-origin:0 50%;transform:scaleX(0.936);">1</span>
<span class="t" style="left:715px;top:558.7px;font-size:12px;line-height:17px;color:#14691f;letter-spacing:-0.05px;">1 hr</span>
<span class="t" style="left:785px;top:558.7px;font-size:12px;line-height:17px;color:#14691f;letter-spacing:-0.11px;">Manufacturing E...</span>
<span class="t" style="left:895px;top:558.7px;font-size:12px;line-height:17px;color:#14691f;letter-spacing:-0.02px;">6/28/2019 7:57:22 AM</span>
<span class="t" style="left:1025px;top:558.7px;font-size:12px;line-height:17px;color:#14691f;letter-spacing:-0.02px;">6/28/2019 8:57:22 AM</span>
<span class="t" style="left:428px;top:596.7px;font-size:12px;line-height:17px;color:#14691f;letter-spacing:-0.27px;">Review BOM and Parts List</span>
<span class="t" style="left:654px;top:596.7px;font-size:12px;line-height:17px;color:#14691f;letter-spacing:-0.28px;transform-origin:0 50%;transform:scaleX(0.936);">2</span>
<span class="t" style="left:715px;top:596.7px;font-size:12px;line-height:17px;color:#14691f;letter-spacing:-0.08px;">45 mins</span>
<span class="t" style="left:785px;top:596.7px;font-size:12px;line-height:17px;color:#3a3a3a;letter-spacing:-0.12px;">BOM Configurati...</span>
<span class="t" style="left:895px;top:596.7px;font-size:12px;line-height:17px;color:#14691f;letter-spacing:-0.02px;">6/28/2019 8:57:22 AM</span>
<span class="t" style="left:1025px;top:596.7px;font-size:12px;line-height:17px;color:#14691f;letter-spacing:-0.02px;">6/28/2019 9:42:22 AM</span>
<span class="t" style="left:428px;top:618.7px;font-size:12px;line-height:17px;color:#14691f;letter-spacing:-0.26px;">Load and Process Design Files</span>
<span class="t" style="left:428px;top:634.7px;font-size:12px;line-height:17px;color:#14691f;letter-spacing:-0.20px;">(ECAD/MCAD/Gerber)</span>
<span class="t" style="left:654px;top:626.7px;font-size:12px;line-height:17px;color:#14691f;letter-spacing:-0.28px;transform-origin:0 50%;transform:scaleX(0.936);">3</span>
<span class="t" style="left:715px;top:626.7px;font-size:12px;line-height:17px;color:#14691f;letter-spacing:-0.06px;">5 mins</span>
<span class="t" style="left:785px;top:626.7px;font-size:12px;line-height:17px;color:#14691f;letter-spacing:-0.11px;">Manufacturing E...</span>
<span class="t" style="left:895px;top:626.7px;font-size:12px;line-height:17px;color:#14691f;letter-spacing:-0.02px;">6/28/2019 9:42:22 AM</span>
<span class="t" style="left:1025px;top:626.7px;font-size:12px;line-height:17px;color:#14691f;letter-spacing:-0.02px;">6/28/2019 9:47:22 AM</span>
<span class="t" style="left:428px;top:656.7px;font-size:12px;line-height:17px;color:#14691f;letter-spacing:0.05px;">Audit Supplied Material</span>
<span class="t" style="left:654px;top:656.7px;font-size:12px;line-height:17px;color:#14691f;letter-spacing:-0.28px;transform-origin:0 50%;transform:scaleX(0.936);">4</span>
<span class="t" style="left:715px;top:656.7px;font-size:12px;line-height:17px;color:#14691f;letter-spacing:-0.08px;">45 mins</span>
<span class="t" style="left:785px;top:656.7px;font-size:12px;line-height:17px;color:#14691f;letter-spacing:-0.13px;">Program Manage...</span>
<span class="t" style="left:895px;top:656.7px;font-size:12px;line-height:17px;color:#14691f;letter-spacing:-0.02px;">6/28/2019 9:47:22 AM</span>
<span class="t" style="left:1025px;top:656.7px;font-size:12px;line-height:17px;color:#14691f;letter-spacing:-0.16px;">6/28/2019 10:32:22...</span>
<div class="a" style="left:1142px;top:557px;width:18px;height:18px;border:1px solid #a6a6a6;background:linear-gradient(#f0f0f0,#dcdcdc)"></div>
<svg style="left:0;top:0" width="1340" height="865" viewBox="0 0 1340 865"><circle cx="1151" cy="566" r="6.9" fill="#000"/><circle cx="1151" cy="562.5" r="1.3" fill="#fff"/><rect x="1149.9" y="564.6" width="2.2" height="5.4" fill="#fff"/></svg>
<div class="a" style="left:1142px;top:595px;width:18px;height:18px;border:1px solid #a6a6a6;background:linear-gradient(#f0f0f0,#dcdcdc)"></div>
<svg style="left:0;top:0" width="1340" height="865" viewBox="0 0 1340 865"><circle cx="1151" cy="604" r="6.9" fill="#000"/><circle cx="1151" cy="600.5" r="1.3" fill="#fff"/><rect x="1149.9" y="602.6" width="2.2" height="5.4" fill="#fff"/></svg>
<div class="a" style="left:1142px;top:625px;width:18px;height:18px;border:1px solid #a6a6a6;background:linear-gradient(#f0f0f0,#dcdcdc)"></div>
<svg style="left:0;top:0" width="1340" height="865" viewBox="0 0 1340 865"><circle cx="1151" cy="634" r="6.9" fill="#000"/><circle cx="1151" cy="630.5" r="1.3" fill="#fff"/><rect x="1149.9" y="632.6" width="2.2" height="5.4" fill="#fff"/></svg>
<div class="a" style="left:1142px;top:655px;width:18px;height:18px;border:1px solid #a6a6a6;background:linear-gradient(#f0f0f0,#dcdcdc)"></div>
<svg style="left:0;top:0" width="1340" height="865" viewBox="0 0 1340 865"><circle cx="1151" cy="664" r="6.9" fill="#000"/><circle cx="1151" cy="660.5" r="1.3" fill="#fff"/><rect x="1149.9" y="662.6" width="2.2" height="5.4" fill="#fff"/></svg>
<div class="a" style="left:1142px;top:679px;width:18px;height:4.5px;border:1px solid #a6a6a6;background:linear-gradient(#f0f0f0,#dcdcdc);border-bottom:none"></div>
<svg style="left:0;top:0" width="1340" height="865" viewBox="0 0 1340 865"><path d="M1144.4 683.5 A6.9 6.9 0 0 1 1157.6 683.5 Z" fill="#000"/></svg>
<div class="a" style="left:1162.5px;top:540px;width:17px;height:143.5px;background:#f0f0f0"></div>
<div class="a" style="left:1163px;top:557px;width:15.5px;height:30px;background:#c1c1c1"></div>
<svg style="left:0;top:0" width="1340" height="865" viewBox="0 0 1340 865"><path d="M1167.4 551 L1171 547.4 L1174.6 551" fill="none" stroke="#505050" stroke-width="1.3"/><path d="M1167.4 671.6 L1171 675.2 L1174.6 671.6" fill="none" stroke="#505050" stroke-width="1.3"/></svg>
<div class="a" style="left:403px;top:683.3px;width:777px;height:15.7px;background:#f0f0f0"></div>
<div class="a" style="left:421px;top:683.3px;width:658px;height:15.7px;background:#c1c1c1"></div>
<svg style="left:0;top:0" width="1340" height="865" viewBox="0 0 1340 865"><path d="M416 688.2 L412.4 691.8 L416 695.4" fill="none" stroke="#505050" stroke-width="1.3"/><path d="M1151.6 688.2 L1155.2 691.8 L1151.6 695.4" fill="none" stroke="#505050" stroke-width="1.3"/></svg>
<div class="a" style="left:1028px;top:728px;width:75px;height:22px;border:1px solid #a6a6a6;background:linear-gradient(#f0f0f0,#dcdcdc)"></div>
<svg style="left:0;top:0" width="1340" height="865" viewBox="0 0 1340 865"><rect x="1044" y="732.6" width="12" height="11.6" rx="1" fill="#0c0c0c"/><rect x="1047.1" y="733.5" width="6.3" height="4" fill="#ececec"/><rect x="1051.3" y="734.0" width="1.4" height="3" fill="#0c0c0c"/><rect x="1046.5" y="739.6" width="7.1" height="3.7" fill="#ececec"/><rect x="1047.4" y="741.0" width="5.3" height="0.6" fill="#bbb"/></svg>
<span class="t" style="left:1062px;top:731.8px;font-size:12px;line-height:17px;color:#1a1a1a;letter-spacing:-0.28px;transform-origin:0 50%;transform:scaleX(0.953);">Save</span>
<div class="a" style="left:1113px;top:728px;width:75px;height:22px;border:1px solid #a6a6a6;background:linear-gradient(#f0f0f0,#dcdcdc)"></div>
<span class="t" style="left:1132px;top:731.8px;font-size:12px;line-height:17px;color:#1a1a1a;letter-spacing:-0.23px;">Cancel</span>
<div class="a" style="left:394.4px;top:793.2px;width:13px;height:13px;background:#c8c8c8;border-radius:1.2px"></div>
<svg style="left:0;top:0" width="1340" height="865" viewBox="0 0 1340 865"><rect x="396.2" y="795.8000000000001" width="1.9" height="7.8" fill="#fff"/><path d="M402.0 795.8000000000001 L398.2 799.7 L402.0 803.6 Z M405.79999999999995 795.8000000000001 L402.0 799.7 L405.79999999999995 803.6 Z" fill="#fff"/></svg>
<div class="a" style="left:428.4px;top:793.2px;width:13px;height:13px;background:#c8c8c8;border-radius:1.2px"></div>
<svg style="left:0;top:0" width="1340" height="865" viewBox="0 0 1340 865"><rect x="431.4" y="795.8000000000001" width="2" height="7.8" fill="#fff"/><path d="M438.4 795.8000000000001 L433.79999999999995 799.7 L438.4 803.6 Z" fill="#fff"/></svg>
<div class="a" style="left:532px;top:793.2px;width:13px;height:13px;background:#c8c8c8;border-radius:1.2px"></div>
<svg style="left:0;top:0" width="1340" height="865" viewBox="0 0 1340 865"><rect x="540" y="795.8000000000001" width="2" height="7.8" fill="#fff"/><path d="M535 795.8000000000001 L539.6 799.7 L535 803.6 Z" fill="#fff"/></svg>
<div class="a" style="left:566px;top:793.2px;width:13px;height:13px;background:#c8c8c8;border-radius:1.2px"></div>
<svg style="left:0;top:0" width="1340" height="865" viewBox="0 0 1340 865"><rect x="575.3" y="795.8000000000001" width="1.9" height="7.8" fill="#fff"/><path d="M567.6 795.8000000000001 L571.4 799.7 L567.6 803.6 Z M571.4 795.8000000000001 L575.2 799.7 L571.4 803.6 Z" fill="#fff"/></svg>
<span class="t" style="left:457px;top:790.3px;font-size:13px;line-height:18px;color:#1a1a1a;letter-spacing:-0.28px;transform-origin:0 50%;transform:scaleX(0.930);">Page 1 of 1</span>
<span class="t" style="left:593px;top:792.0px;font-size:12px;line-height:17px;color:#1a1a1a;letter-spacing:-0.28px;transform-origin:0 50%;transform:scaleX(0.994);">Go To Page</span>
<div class="a" style="left:656px;top:788px;width:65px;height:22px;border:1px solid #d5d5d5;background:#fff"></div>
<div class="dd" style="left:704px;top:790px;width:15px;height:18px;border-color:#d4d4d4"></div><svg style="left:704px;top:790px" width="15" height="18" viewBox="0 0 15 18"><path d="M3.9 7.4 L7.5 11.0 L11.1 7.4" fill="none" stroke="#b0b0b0" stroke-width="1.3"/></svg>
<span class="t" style="left:661px;top:792.0px;font-size:12px;line-height:17px;color:#b0b0b0;">1</span>
<span class="t" style="left:1107px;top:792.0px;font-size:12px;line-height:17px;color:#1a1a1a;letter-spacing:-0.28px;transform-origin:0 50%;transform:scaleX(0.958);">Page Size</span>
<div class="a" style="left:1159px;top:788px;width:56px;height:22px;border:1px solid #ababab;background:#fff"></div>
<div class="dd" style="left:1198px;top:790px;width:15px;height:18px;border-color:#adadad"></div><svg style="left:1198px;top:790px" width="15" height="18" viewBox="0 0 15 18"><path d="M3.9 7.4 L7.5 11.0 L11.1 7.4" fill="none" stroke="#444" stroke-width="1.3"/></svg>
<span class="t" style="left:1164px;top:792.0px;font-size:12px;line-height:17px;color:#1a1a1a;letter-spacing:-0.28px;transform-origin:0 50%;transform:scaleX(0.977);">20</span>
<div class="a" style="left:0;top:0;width:1325px;height:817px;overflow:hidden">
<div class="a" style="left:1261px;top:82px;width:120px;height:323px;border:1px solid #a5a5a5;background:#fff"></div>
<div class="a" style="left:1261px;top:103px;width:120px;height:1px;background:#a5a5a5"></div>
<span class="t" style="left:1273px;top:85.7px;font-size:12px;line-height:17px;color:#1a1a1a;letter-spacing:-0.18px;">Projects B</span>
<div class="a" style="left:1306px;top:104px;width:1px;height:277px;background:#d6d6d6"></div>
<div class="a" style="left:1306px;top:380px;width:40px;height:1px;background:#d6d6d6"></div>
<div class="a" style="left:1303px;top:132.5px;width:3px;height:1px;background:#d6d6d6"></div>
<div class="a" style="left:1303px;top:187.5px;width:3px;height:1px;background:#d6d6d6"></div>
<div class="a" style="left:1303px;top:297.5px;width:3px;height:1px;background:#d6d6d6"></div>
<div class="a" style="left:1303px;top:352.5px;width:3px;height:1px;background:#d6d6d6"></div>
<div class="a" style="left:1300px;top:242px;width:6px;height:1px;background:#c8c8c8"></div>
<div class="a" style="left:1318px;top:381px;width:1px;height:3px;background:#d6d6d6"></div>
<div class="a" style="left:1307px;top:159px;width:40px;height:167px;background:#30507b"></div>
<span class="t" style="left:1267px;top:234.7px;font-size:12px;line-height:17px;color:#222;letter-spacing:-0.21px;">Aegis</span>
<span class="t" style="left:1304.2px;top:388.1px;font-size:12px;line-height:17px;color:#222;">0</span>
<div class="a" style="left:1261px;top:415px;width:120px;height:323px;border:1px solid #a5a5a5;background:#fff"></div>
<div class="a" style="left:1261px;top:436px;width:120px;height:1px;background:#a5a5a5"></div>
<span class="t" style="left:1273px;top:418.7px;font-size:12px;line-height:17px;color:#1a1a1a;letter-spacing:-0.18px;">Projects R</span>
<div class="a" style="left:1311px;top:488px;width:40px;height:67px;background:#f6f6f6"></div>
<div class="a" style="left:1310px;top:437px;width:1px;height:186px;background:#d6d6d6"></div>
<div class="a" style="left:1305px;top:622px;width:5px;height:1px;background:#d6d6d6"></div>
<div class="a" style="left:1307px;top:608px;width:3px;height:1px;background:#d6d6d6"></div>
<div class="a" style="left:1307px;top:595px;width:3px;height:1px;background:#d6d6d6"></div>
<div class="a" style="left:1307px;top:582px;width:3px;height:1px;background:#d6d6d6"></div>
<div class="a" style="left:1307px;top:568px;width:3px;height:1px;background:#d6d6d6"></div>
<div class="a" style="left:1305px;top:555px;width:5px;height:1px;background:#d6d6d6"></div>
<div class="a" style="left:1307px;top:541px;width:3px;height:1px;background:#d6d6d6"></div>
<div class="a" style="left:1307px;top:528px;width:3px;height:1px;background:#d6d6d6"></div>
<div class="a" style="left:1307px;top:515px;width:3px;height:1px;background:#d6d6d6"></div>
<div class="a" style="left:1307px;top:501px;width:3px;height:1px;background:#d6d6d6"></div>
<div class="a" style="left:1305px;top:488px;width:5px;height:1px;background:#d6d6d6"></div>
<div class="a" style="left:1307px;top:474px;width:3px;height:1px;background:#d6d6d6"></div>
<div class="a" style="left:1307px;top:461px;width:3px;height:1px;background:#d6d6d6"></div>
<div class="a" style="left:1307px;top:448px;width:3px;height:1px;background:#d6d6d6"></div>
<div class="a" style="left:1303px;top:487px;width:7px;height:1px;background:#c8c8c8"></div>
<div class="a" style="left:1303px;top:556px;width:7px;height:1px;background:#c8c8c8"></div>
<div class="a" style="left:1303px;top:622px;width:7px;height:1px;background:#c8c8c8"></div>
<div class="a" style="left:1314px;top:622px;width:1px;height:3px;background:#d6d6d6"></div>
<div class="a" style="left:1318px;top:454px;width:40px;height:168px;background:linear-gradient(90deg,#5a8cc8 0,#3f6cab 3px,#35609c 8px);"></div>
<div class="a" style="left:1318px;top:454px;width:40px;height:168px;background:linear-gradient(180deg,rgba(80,130,190,0.55) 0%,rgba(60,100,160,0.2) 40%,rgba(30,50,90,0.45) 100%)"></div>
<div class="a" style="left:1318px;top:623px;width:40px;height:40px;background:linear-gradient(180deg,rgba(70,90,130,0.45),rgba(255,255,255,0) 90%)"></div>
<div class="a" style="left:1299.3px;top:531.6px;width:40px;height:14.4px;background:#4a80c0;border-radius:2px"></div>
<span class="t" style="left:1304.4px;top:532.0px;font-size:10.5px;line-height:15px;color:#fff;letter-spacing:-0.28px;transform-origin:0 50%;transform:scaleX(0.989);">2498</span>
<span class="t" style="left:1266.6px;top:479.7px;font-size:12px;line-height:17px;color:#222;letter-spacing:-0.22px;">20000</span>
<span class="t" style="left:1266.6px;top:548.7px;font-size:12px;line-height:17px;color:#222;letter-spacing:-0.22px;">10000</span>
<span class="t" style="left:1292.3px;top:614.9px;font-size:12px;line-height:17px;color:#222;">0</span>
<div class="a" style="left:1261px;top:748px;width:120px;height:100px;border:1px solid #a5a5a5;background:#fff"></div>
<div class="a" style="left:1261px;top:769px;width:120px;height:1px;background:#a5a5a5"></div>
<span class="t" style="left:1273px;top:751.7px;font-size:12px;line-height:17px;color:#1a1a1a;letter-spacing:-0.10px;">Average T</span>
<div class="a" style="left:1304px;top:771px;width:40px;height:16px;background:#f6f6f6"></div>
<div class="a" style="left:1304px;top:787px;width:40px;height:1px;background:#d9d9d9"></div>
<div class="a" style="left:1303px;top:771px;width:1px;height:60px;background:#d6d6d6"></div>
<div class="a" style="left:1298px;top:787px;width:6px;height:1px;background:#c8c8c8"></div>
<div class="a" style="left:1300px;top:803px;width:3px;height:1px;background:#d6d6d6"></div>
<span class="t" style="left:1267.6px;top:779.9px;font-size:12px;line-height:17px;color:#222;letter-spacing:-0.28px;">3000</span>
<div class="a" style="left:1313px;top:793px;width:40px;height:40px;background:linear-gradient(90deg,#6a9ad2 0,#4a7cbc 2px,#4474b6 8px);border-top:1px solid #7aa6d8"></div>
</div>
<div class="a" style="left:15px;top:834px;width:1310px;height:16px;background:#f0f0f0"></div>
<div class="a" style="left:32px;top:834px;width:674px;height:16px;background:#c1c1c1"></div>
<svg style="left:0;top:0" width="1340" height="865" viewBox="0 0 1340 865"><path d="M26.2 838 L22 842.2 L26.2 846.4" fill="none" stroke="#505050" stroke-width="1.5"/><path d="M1315 838 L1319.2 842.2 L1315 846.4" fill="none" stroke="#505050" stroke-width="1.5"/></svg>
</body></html>
